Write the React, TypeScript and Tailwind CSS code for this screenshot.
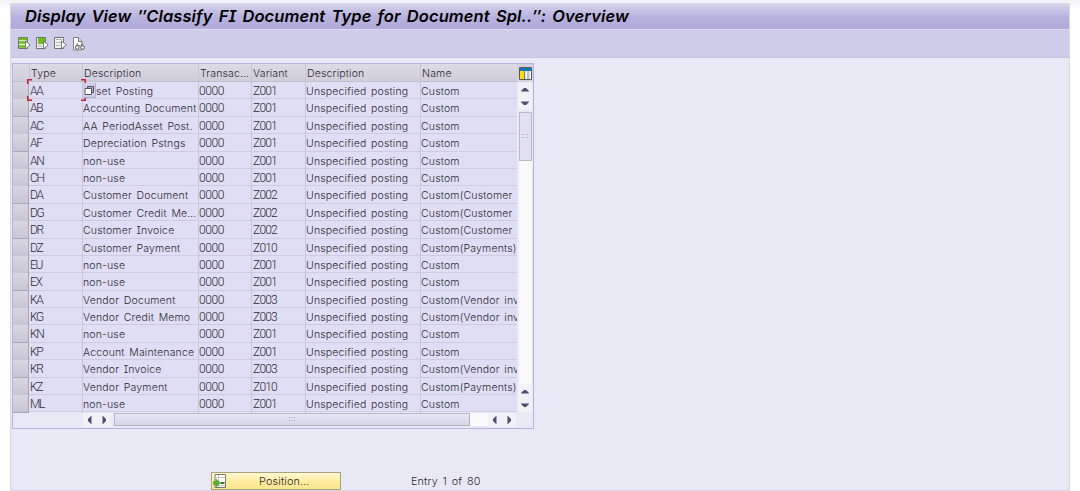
import React from 'react';
import clsx from 'clsx';

type Entry = {
  type: string;
  description: string;
  variant: string;
  name: string;
};

const entries: Entry[] = [
  { type: 'AA', description: 'set Posting', variant: 'Z001', name: 'Custom' },
  { type: 'AB', description: 'Accounting Document', variant: 'Z001', name: 'Custom' },
  { type: 'AC', description: 'AA PeriodAsset Post.', variant: 'Z001', name: 'Custom' },
  { type: 'AF', description: 'Depreciation Pstngs', variant: 'Z001', name: 'Custom' },
  { type: 'AN', description: 'non-use', variant: 'Z001', name: 'Custom' },
  { type: 'CH', description: 'non-use', variant: 'Z001', name: 'Custom' },
  { type: 'DA', description: 'Customer Document', variant: 'Z002', name: 'Custom(Customer' },
  { type: 'DG', description: 'Customer Credit Me…', variant: 'Z002', name: 'Custom(Customer' },
  { type: 'DR', description: 'Customer Invoice', variant: 'Z002', name: 'Custom(Customer' },
  { type: 'DZ', description: 'Customer Payment', variant: 'Z010', name: 'Custom(Payments)' },
  { type: 'EU', description: 'non-use', variant: 'Z001', name: 'Custom' },
  { type: 'EX', description: 'non-use', variant: 'Z001', name: 'Custom' },
  { type: 'KA', description: 'Vendor Document', variant: 'Z003', name: 'Custom(Vendor inv' },
  { type: 'KG', description: 'Vendor Credit Memo', variant: 'Z003', name: 'Custom(Vendor inv' },
  { type: 'KN', description: 'non-use', variant: 'Z001', name: 'Custom' },
  { type: 'KP', description: 'Account Maintenance', variant: 'Z001', name: 'Custom' },
  { type: 'KR', description: 'Vendor Invoice', variant: 'Z003', name: 'Custom(Vendor inv' },
  { type: 'KZ', description: 'Vendor Payment', variant: 'Z010', name: 'Custom(Payments)' },
  { type: 'ML', description: 'non-use', variant: 'Z001', name: 'Custom' },
];

const gridCols = 'grid grid-cols-[16px_53px_116px_53px_54px_115px_97px]';
const codeText = 'font-["Roboto"] font-light text-[12px] leading-[18px]';

const Arrow: React.FC<{ dir: 'up' | 'down' | 'left' | 'right' }> = ({ dir }) => {
  const paths = {
    up: 'M3 9.500V9L6 6h2l3 3v.5z',
    down: 'M3 5.500V6l3 3h2l3-3v-.5z',
    left: 'M8.500 3H8L5 6v2l3 3h.5z',
    right: 'M5.500 3H6l3 3v2l-3 3h-.5z',
  };
  return (
    <svg viewBox="0 0 14 14" className="h-[14px] w-[14px] shrink-0 bg-[#f2f1f8]">
      <path d={paths[dir]} fill="#504c72" />
    </svg>
  );
};

const Grip = () => (
  <svg viewBox="0 0 6 5" className="h-[5px] w-[6px]">
    <path d="M0 .5h1M2.500 .5h1M5 .5h1M0 3.500h1M2.500 3.500h1M5 3.500h1" stroke="#aaa7bd" />
  </svg>
);

const SelectIcon: React.FC<{ fill: 'all' | 'block' | 'none' }> = ({ fill }) => (
  <svg viewBox="0 0 13 13" className="h-[13px] w-[13px]">
    <path d="M.5 .5h9v11h-9z" fill="#efefee" stroke="#74746c" />
    {fill === 'all' && <path d="M1 2h8M1 5.500h8M1 9.500h6" stroke="#6cbf18" strokeWidth="2.400" />}
    {fill === 'block' && <path d="M2 1h7v6H2z" fill="#6cbf18" />}
    {fill === 'none' && <path d="M2 2.500h6M2 5.500h5M2 8.500h4" stroke="#b5b5b0" />}
    {fill === 'block' && <path d="M2 9h4" stroke="#aaa" />}
    <path d="M7.500 4v8l4.700-4z" fill="#fff" stroke="#6d6d72" strokeWidth=".9" />
  </svg>
);

const FindIcon = () => (
  <svg viewBox="0 0 13 14" className="h-[14px] w-[13px]">
    <path d="M1.500 .5h5l3.500 4v8.500H1.500z" fill="#fafafa" stroke="#858585" />
    <path d="M6.500 .5v4H10" fill="#ddd" stroke="#777" />
    <path d="M5.500 6.500 4.500 10M9.500 6.500l1.500 3.500M7 8.500h1.500" stroke="#666" strokeWidth="1.200" />
    <circle cx="5.300" cy="10.500" r="1.900" fill="#eee" stroke="#555" />
    <circle cx="10.500" cy="10.500" r="1.900" fill="#eee" stroke="#555" />
  </svg>
);

const ConfigIcon = () => (
  <svg viewBox="0 0 13 13" className="h-[13px] w-[13px]">
    <path d="M.5 .5h12v12H.5z" fill="#fff" stroke="#555b60" />
    <path d="M1 1h11v3H1z" fill="#1678b8" />
    <path d="M1 4h4v8H1z" fill="#ffdf00" />
    <path d="M5.500 4v8M9 4v8" stroke="#79828a" />
    <path d="M6 4h1v8H6M10 4h1v8h-1" fill="#dce1ea" />
  </svg>
);

const PositionIcon = () => (
  <svg viewBox="0 0 13 14" className="h-[14px] w-[13px]">
    <path d="M2 .5h10.500v13H2z" fill="#fff" stroke="#77776f" />
    <path d="M5.500 1v12M2.500 3.500h9.500M2.500 11.500h9.500" stroke="#c5c5bd" />
    <path d="M7.500 9h4" stroke="#26803c" strokeWidth="2" />
    <path d="M.5 7.500h2.500V5l4.200 4L3 13v-2.500H.5z" fill="#57b32b" stroke="#39802a" strokeWidth=".5" />
  </svg>
);

// red corner marks around the focused cell and its value help button
const CellFocus = () => (
  <>
    <svg viewBox="0 0 59 22" className="absolute top-[-3px] left-[-2px] z-10 h-[22px] w-[59px]">
      <path d="M.75 5V.75H5M54 .75h4.250V5M.75 17v4.250H5M54 21.250h4.250V17" fill="none" stroke="#bd2435" strokeWidth="1.500" />
    </svg>
    <div className="absolute top-[1px] left-[54px] z-20 flex h-[15px] w-[13px] items-center justify-center border-r border-b border-[#b4afd2] bg-[#d1cdea]">
      <svg viewBox="0 0 11 11" className="h-[11px] w-[11px]">
        <path d="M3.500 1.500h6v6h-6z" fill="#aaa8b4" stroke="#56545b" />
        <path d="M1 3.500h6.500v6H1z" fill="#fff" stroke="#56545b" />
      </svg>
    </div>
  </>
);

const Cell: React.FC<{ className?: string; children: React.ReactNode }> = ({ className, children }) => (
  <div className={clsx('overflow-hidden border-l border-[#c9c6dc] whitespace-nowrap', className)}>{children}</div>
);

const App: React.FC = () => {
  return (
    <div className='h-[491px] w-[1080px] overflow-hidden bg-gradient-to-b from-[#f3f2f8] to-white to-[10px] px-[10px] pt-[3px] font-["Inter",sans-serif] text-[10.500px] font-light tracking-[0.17px] text-[#2b2a33] [font-feature-settings:"cv08"] [word-spacing:1.500px]'>
      <div className="flex h-[488px] flex-col border border-[#d8d6e8] bg-[#e9e9f5]">
        {/* Title */}
        <div className="h-[26px] shrink-0 border-t border-b border-t-[#d8d5eb] border-b-[#dedcf0] bg-gradient-to-b from-[#d3d0ea] via-[#b8b2de] to-[#b1aada] pl-[14px]">
          <h1 className="text-[16.500px] leading-[23px] font-semibold tracking-[0.100px] whitespace-pre text-black italic [word-spacing:1.900px]">
            Display View ″Classify FI Document Type for Document Spl..″: Overview
          </h1>
        </div>

        {/* Toolbar */}
        <div className="flex h-[28px] shrink-0 items-center gap-[5px] border-b border-[#c8c5e2] bg-[#cecde9] pl-[7px]">
          <SelectIcon fill="all" />
          <SelectIcon fill="block" />
          <SelectIcon fill="none" />
          <FindIcon />
        </div>

        {/* Table */}
        <div className="mt-[5px] ml-[1px] h-[366px] w-[522px] shrink-0 border border-[#b7b2df]">
          <div className="flex h-[348px]">
            <div className="w-[504px]">
              <div className={clsx(gridCols, 'h-[18px] border-b border-[#c2bfcc] bg-gradient-to-b from-[#dddbe5] to-[#cfcdd9] leading-[20px]')}>
                <div />
                <Cell className="pl-[1px]">Type</Cell>
                <Cell className="pl-[1px]">Description</Cell>
                <Cell className="pl-[1px]">Transac…</Cell>
                <Cell className="pl-[1px]">Variant</Cell>
                <Cell className="pl-[1px]">Description</Cell>
                <Cell className="pl-[1px]">Name</Cell>
              </div>
              {entries.map((e, i) => (
                <div key={e.type} className={clsx(gridCols, 'h-[17.400px] border-b border-[#cfcce2] bg-[#e0def4] leading-[20px]')}>
                  <div className="border-r border-b border-[#aaa7b8] bg-gradient-to-b from-[#d8d6df] to-[#c8c6d3]" />
                  <div className={clsx('relative pl-[1px] tracking-[-1.300px]', codeText)}>
                    {e.type}
                    {i === 0 && <CellFocus />}
                  </div>
                  <Cell className={i === 0 ? 'pl-[13px]' : undefined}>{e.description}</Cell>
                  <Cell className={clsx('tracking-[-0.4px]', codeText)}>0000</Cell>
                  <Cell className={clsx('pl-[1px] tracking-[-0.8px]', codeText)}>{e.variant}</Cell>
                  <Cell>Unspecified posting</Cell>
                  <Cell>{e.name}</Cell>
                </div>
              ))}
            </div>
            <div className="flex w-[16px] flex-col items-center">
              <div className="flex h-[18px] w-full items-center justify-center bg-[#d4d2dd]">
                <ConfigIcon />
              </div>
              <Arrow dir="up" />
              <Arrow dir="down" />
              <div className="mt-[2px] flex w-[13px] flex-1 flex-col bg-[#fafafc]">
                <div className="flex h-[49px] items-center justify-center border border-[#bbb8d0] bg-[#e2e0f1]">
                  <Grip />
                </div>
              </div>
              <Arrow dir="up" />
              <Arrow dir="down" />
            </div>
          </div>
          <div className="flex h-[15px] items-center pl-[70px]">
            <Arrow dir="left" />
            <Arrow dir="right" />
            <div className="ml-[3px] flex h-[13px] w-[374px] bg-[#fafafc]">
              <div className="flex w-[356px] items-center justify-center border border-[#b5b2c8] bg-gradient-to-b from-[#e9e7f6] to-[#d5d3e8]">
                <Grip />
              </div>
            </div>
            <Arrow dir="left" />
            <Arrow dir="right" />
          </div>
        </div>

        {/* Footer */}
        <div className="mt-[43px] ml-[200px] flex h-[18px] items-center">
          <button className="flex h-[18px] w-[130px] items-center border border-[#aaa27e] bg-gradient-to-b from-[#fff8d0] via-[#ffeda0] to-[#f9e68f] pl-[1px]">
            <PositionIcon />
            <span className="ml-[33px] pt-[3px] text-[10.800px]">Position…</span>
          </button>
          <span className="ml-[70px] pt-[3px] text-[10.800px]">Entry 1 of 80</span>
        </div>
      </div>
    </div>
  );
};

export default App;
